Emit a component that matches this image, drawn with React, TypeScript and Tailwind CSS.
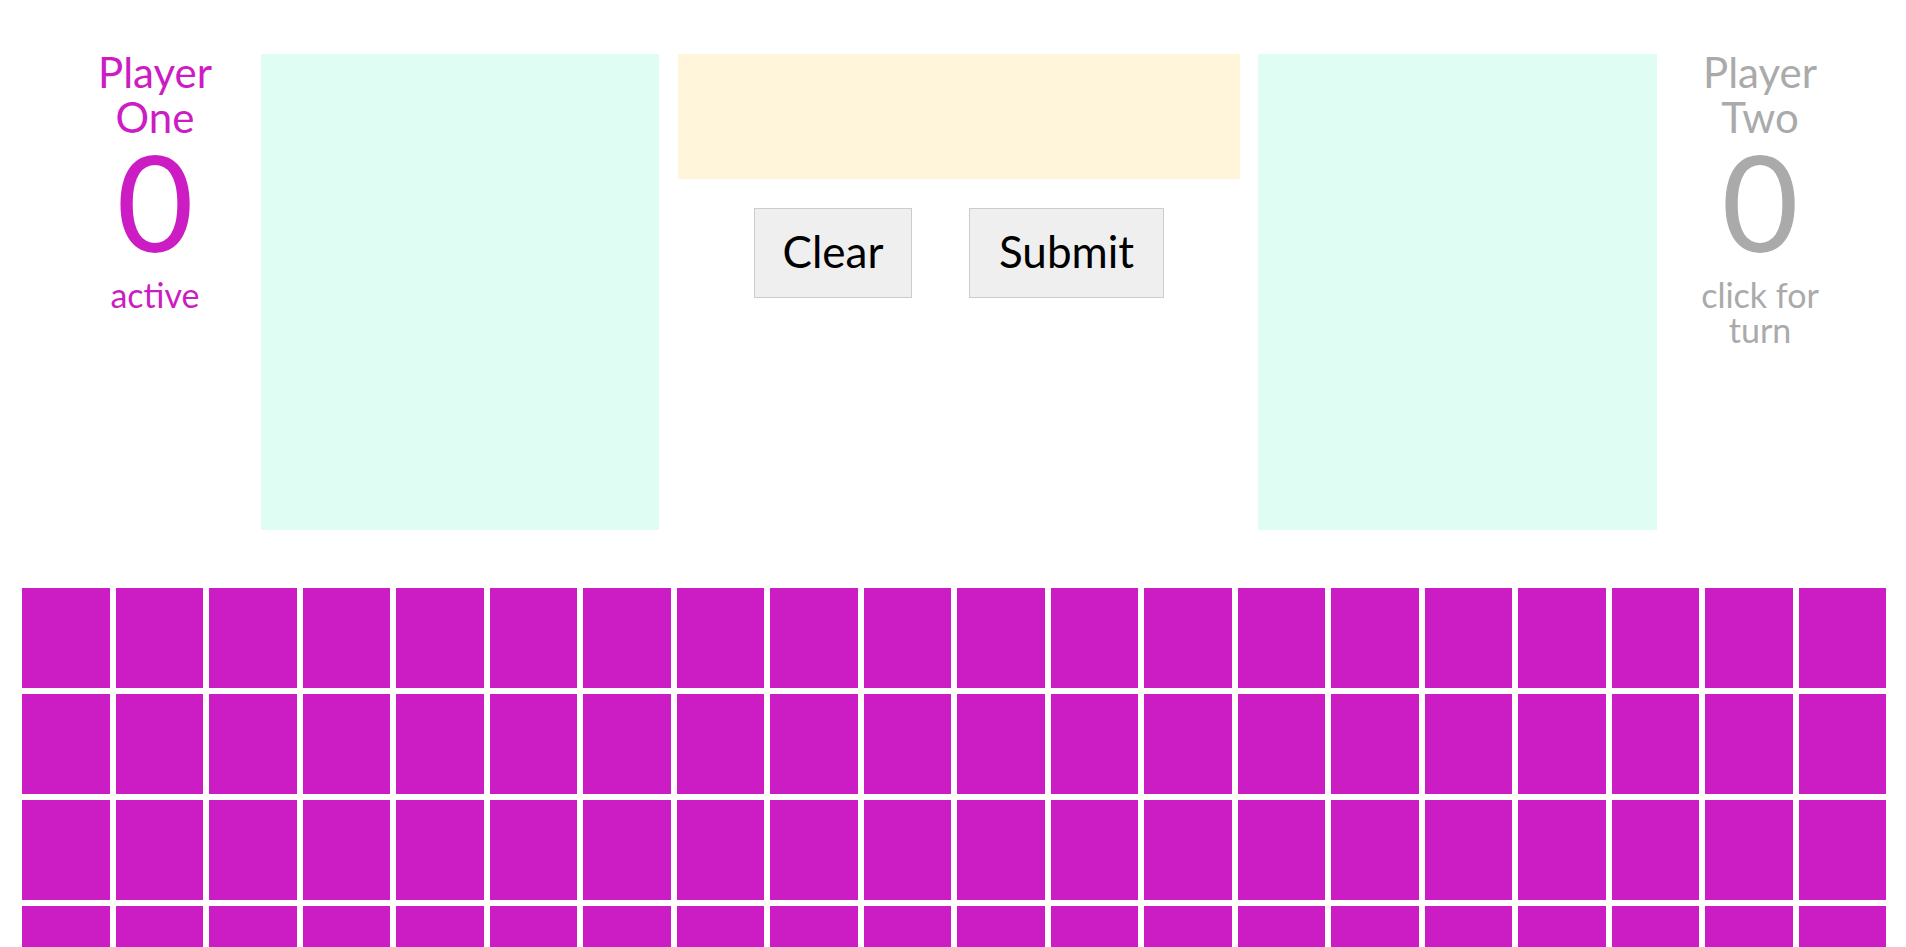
const tiles = Array.from({ length: 100 }, (_, i) => i);

const PlayerPanel = ({
	name,
	score,
	status,
	active,
}: {
	name: string;
	score: number;
	status: string;
	active: boolean;
}) => {
	return (
		<div
			className={
				'w-[150px] shrink-0 -mt-1 text-center cursor-pointer ' + (active ? 'text-[#cc1dc4]' : 'text-[#aaaaaa]')
			}>
			<div className="text-[42px] leading-[45px]">{name}</div>
			<div className="text-[133px] leading-[121px]">{score}</div>
			<div className="mt-[16px] text-[34px] leading-[35px]">{status}</div>
		</div>
	);
};

export default function App() {
	return (
		<div className="min-h-screen bg-white font-['Lato',sans-serif]">
			<div className="flex items-start pt-[54px] pl-[80px]">
				<PlayerPanel name="Player One" score={0} status="active" active />
				<div className="ml-[31px] w-[398px] h-[476px] shrink-0 bg-[#e0fdf4]" />
				<div className="ml-[19px] w-[562px] shrink-0 flex flex-col items-center">
					<div className="w-full h-[125px] bg-[#fef5da]" />
					<div className="mt-[29px] flex gap-[57px]">
						<button className="w-[158px] h-[90px] pb-[4px] bg-[#efefef] border border-[#cccccc] text-[44px] text-black">
							Clear
						</button>
						<button className="w-[195px] h-[90px] pb-[4px] bg-[#efefef] border border-[#cccccc] text-[44px] text-black">
							Submit
						</button>
					</div>
				</div>
				<div className="ml-[18px] w-[399px] h-[476px] shrink-0 bg-[#e0fdf4]" />
				<div className="ml-[28px]">
					<PlayerPanel name="Player Two" score={0} status="click for turn" active={false} />
				</div>
			</div>
			<div className="mt-[58px] pl-[22px] pr-[20px] grid grid-cols-20 gap-[6px]">
				{tiles.map((t) => (
					<div key={t} className="h-[100px] bg-[#cc1dc5] cursor-pointer" />
				))}
			</div>
		</div>
	);
}
